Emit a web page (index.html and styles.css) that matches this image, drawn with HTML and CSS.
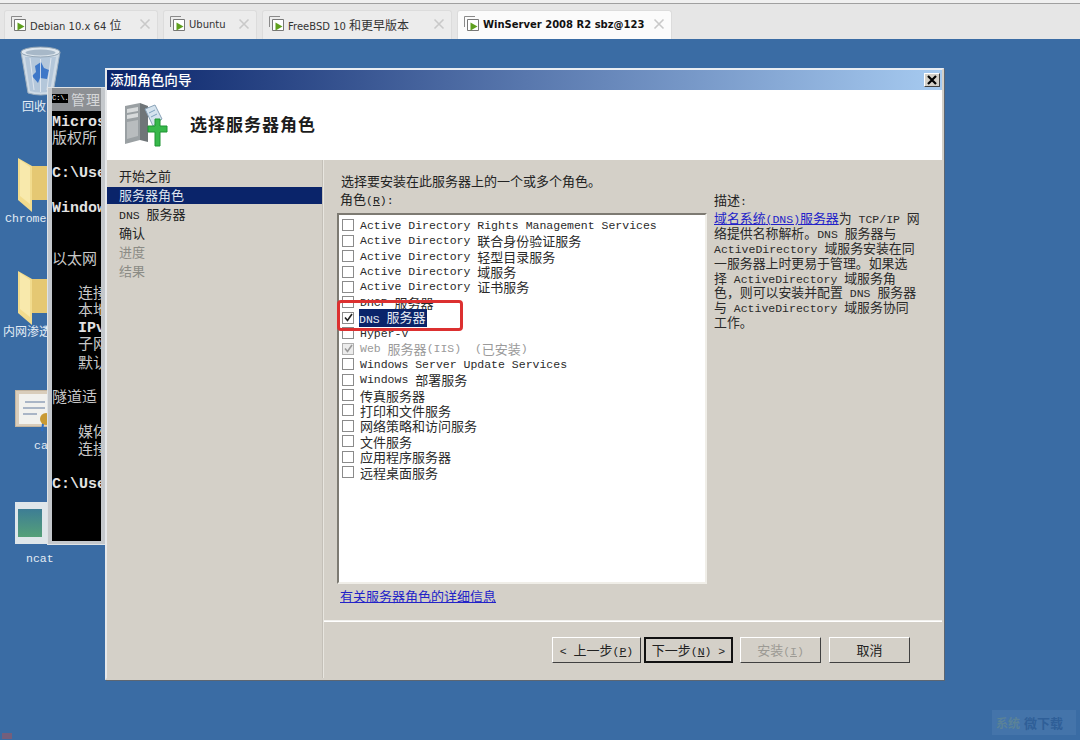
FILE: index.html
```html
<!DOCTYPE html>
<html lang="zh-CN">
<head>
<meta charset="utf-8">
<title>添加角色向导</title>
<link rel="stylesheet" href="styles.css">
</head>
<body>
<svg class="defs" width="0" height="0" aria-hidden="true">
  <symbol id="vm" viewBox="0 0 18 18">
    <path d="M1.5 12V1.5H12" fill="none" stroke="#8a8a8a"/>
    <path d="M4.5 15.5V4.5H15.5V15.5Z" fill="#fff" stroke="#777"/>
    <path d="M7.5 7.5L14.5 11.5L7.5 15.5Z" fill="#5fa01e"/>
  </symbol>
  <symbol id="x" viewBox="0 0 12 12">
    <path d="M1.5 1.5L10.5 10.5M10.5 1.5L1.5 10.5" stroke="#c9c9c9" stroke-width="1.6" fill="none"/>
  </symbol>
</svg>

<header class="tabbar">
  <div class="tab tab-1"><svg class="tab-icon"><use href="#vm"/></svg><span class="tab-label">Debian 10.x 64 <span class="cn">位</span></span><svg class="tab-x"><use href="#x"/></svg></div>
  <div class="tab tab-2"><svg class="tab-icon"><use href="#vm"/></svg><span class="tab-label">Ubuntu</span><svg class="tab-x"><use href="#x"/></svg></div>
  <div class="tab tab-3"><svg class="tab-icon"><use href="#vm"/></svg><span class="tab-label">FreeBSD 10 <span class="cn">和更早版本</span></span><svg class="tab-x"><use href="#x"/></svg></div>
  <div class="tab tab-4 active"><svg class="tab-icon"><use href="#vm"/></svg><span class="tab-label">WinServer 2008 R2 sbz@123</span><svg class="tab-x"><use href="#x"/></svg></div>
</header>

<main class="desktop">
  <div class="desk-icon bin">
    <svg width="42" height="52" viewBox="0 0 42 52">
      <path d="M1 7L8 48Q21 52 33 48L40 7Z" fill="#cfdbe6" stroke="#9fb0bf"/>
      <path d="M5 12L10 46Q21 49 30 46L36 12Z" fill="#b4c7da"/>
      <ellipse cx="20.5" cy="7" rx="19.5" ry="5" fill="#dfe7ee" stroke="#93a5b5"/>
      <ellipse cx="20.5" cy="7.5" rx="15" ry="3" fill="#a7b8c8"/>
      <path d="M15 21L21 17L24 23L29 25L27 34L20 33L18 38L12 31L16 27Z" fill="#3f78c8"/>
      <path d="M10 13L14 45M31 13L27 45M20.500 14V47" stroke="#e8eef4" stroke-width="1" fill="none" opacity=".8"/>
    </svg>
  </div>
  <div class="desk-label label-bin">回收</div>

  <div class="desk-icon folder-a"><svg width="40" height="54" viewBox="0 0 40 54"><path d="M0 0L14 8V54L0 42Z" fill="#f2dc8e"/><path d="M14 8H40V42H14Z" fill="#e5c873"/><path d="M2 2L12 9V46L2 38Z" fill="#f8e9ac"/></svg></div>
  <div class="desk-label label-chrome">Chrome</div>

  <div class="desk-icon folder-b"><svg width="40" height="54" viewBox="0 0 40 54"><path d="M0 0L14 8V54L0 42Z" fill="#f2dc8e"/><path d="M14 8H40V42H14Z" fill="#e5c873"/><path d="M2 2L12 9V46L2 38Z" fill="#f8e9ac"/></svg></div>
  <div class="desk-label label-net">内网渗透</div>

  <div class="desk-icon cert"><svg width="40" height="42" viewBox="0 0 40 42"><rect x="0.5" y="0.5" width="36" height="36" fill="#d9cdbb" stroke="#c4b59f"/><rect x="4" y="4" width="32" height="30" fill="#f1f1ee"/><path d="M10 12H30M8 18H30M8 24H22" stroke="#a9b5c6" stroke-width="2"/><circle cx="31" cy="29" r="6" fill="#c99a34"/><path d="M28 34L27 41M34 34L35 41" stroke="#2f6fc4" stroke-width="2"/></svg></div>
  <div class="desk-label label-ca">ca</div>

  <div class="desk-icon ncat"><svg width="40" height="42" viewBox="0 0 40 42"><defs><linearGradient id="ng" x1="0" y1="0" x2="0" y2="1"><stop offset="0" stop-color="#3d7d95"/><stop offset="1" stop-color="#55a078"/></linearGradient></defs><rect width="40" height="42" fill="#dfe6ea"/><rect x="3" y="7" width="24" height="28" fill="url(#ng)"/></svg></div>
  <div class="desk-label label-ncat">ncat</div>

  <section class="cmd">
    <div class="cmd-title"><span class="cmd-badge">C:\.</span><span class="cmd-name">管理员</span></div>
    <div class="cmd-body">
      <div class="cb c1"><b>Micros</b></div>
      <div class="cb c2">版权所</div>
      <div class="cb c3"><b>C:\Use</b></div>
      <div class="cb c4"><b>Window</b></div>
      <div class="cb c5">以太网</div>
      <div class="cb c6">连接</div>
      <div class="cb c7">本地</div>
      <div class="cb c8"><b>IPv</b></div>
      <div class="cb c9">子网</div>
      <div class="cb c10">默认</div>
      <div class="cb c11">隧道适</div>
      <div class="cb c12">媒体</div>
      <div class="cb c13">连接</div>
      <div class="cb c14"><b>C:\Use</b></div>
    </div>
  </section>

  <section class="dialog">
    <div class="titlebar">
      <span class="title-text">添加角色向导</span>
      <span class="close-btn"><svg width="12" height="10" viewBox="0 0 12 10"><path d="M2 1L10 9M10 1L2 9" stroke="#000" stroke-width="2.2" fill="none"/></svg></span>
    </div>
    <div class="banner">
      <svg class="banner-icon" width="44" height="46" viewBox="0 0 44 46">
        <path d="M1 4L16 1V38L1 42Z" fill="#9aa0a3"/>
        <path d="M16 1L24 4V40L16 38Z" fill="#6f7578"/>
        <path d="M3 7L14 5V9L3 11ZM3 13L14 11V15L3 17Z" fill="#d7dadb"/>
        <path d="M3 20L14 18V34L3 37Z" fill="#b8bcbe"/>
        <path d="M21 7L31 3L38 17L29 24Z" fill="#d5e3ee" stroke="#8aa3b8"/>
        <path d="M25 11L31 8M27 15L33 12" stroke="#7ea1bd"/>
        <path d="M24 24H31V17H36V24H43V30H36V44H31V30H24Z" fill="#37b84a" stroke="#1f9433"/>
      </svg>
      <h1 class="banner-title">选择服务器角色</h1>
    </div>
    <div class="content">
      <nav class="steps">
        <div class="step">开始之前</div>
        <div class="step current">服务器角色</div>
        <div class="step"><span class="l">DNS </span>服务器</div>
        <div class="step">确认</div>
        <div class="step muted">进度</div>
        <div class="step muted">结果</div>
      </nav>
      <div class="panel">
        <div class="panel-main">
          <div class="roles">
            <p class="intro">选择要安装在此服务器上的一个或多个角色。</p>
            <p class="roles-label">角色<span class="l">(<span class="u">R</span>):</span></p>
            <div class="listbox">
              <div class="row"><i class="cb-box"></i><span class="l">Active Directory Rights Management Services</span></div>
              <div class="row"><i class="cb-box"></i><span class="l">Active Directory </span>联合身份验证服务</div>
              <div class="row"><i class="cb-box"></i><span class="l">Active Directory </span>轻型目录服务</div>
              <div class="row"><i class="cb-box"></i><span class="l">Active Directory </span>域服务</div>
              <div class="row"><i class="cb-box"></i><span class="l">Active Directory </span>证书服务</div>
              <div class="row"><i class="cb-box"></i><span class="l">DHCP </span>服务器</div>
              <div class="row"><i class="cb-box on"><svg width="9" height="9" viewBox="0 0 9 9"><path d="M1 4.5L3.5 7.5L8 1" fill="none" stroke="#222" stroke-width="1.6"/></svg></i><span class="sel"><span class="l">DNS </span>服务器</span></div>
              <div class="row"><i class="cb-box"></i><span class="l">Hyper-V</span></div>
              <div class="row dim"><i class="cb-box on gray"><svg width="9" height="9" viewBox="0 0 9 9"><path d="M1 4.5L3.5 7.5L8 1" fill="none" stroke="#999" stroke-width="1.6"/></svg></i><span class="l">Web </span>服务器<span class="l">(IIS)  (</span>已安装<span class="l">)</span></div>
              <div class="row"><i class="cb-box"></i><span class="l">Windows Server Update Services</span></div>
              <div class="row"><i class="cb-box"></i><span class="l">Windows </span>部署服务</div>
              <div class="row"><i class="cb-box"></i>传真服务器</div>
              <div class="row"><i class="cb-box"></i>打印和文件服务</div>
              <div class="row"><i class="cb-box"></i>网络策略和访问服务</div>
              <div class="row"><i class="cb-box"></i>文件服务</div>
              <div class="row"><i class="cb-box"></i>应用程序服务器</div>
              <div class="row"><i class="cb-box"></i>远程桌面服务</div>
            </div>
            <a class="more" href="#">有关服务器角色的详细信息</a>
          </div>
          <aside class="desc">
            <p class="desc-head">描述<span class="l">:</span></p>
            <p class="desc-line"><a href="#">域名系统<span class="l">(DNS)</span>服务器</a>为<span class="l"> TCP/IP </span>网</p>
            <p class="desc-line">络提供名称解析。<span class="l">DNS </span>服务器与</p>
            <p class="desc-line"><span class="l">ActiveDirectory </span>域服务安装在同</p>
            <p class="desc-line">一服务器上时更易于管理。如果选</p>
            <p class="desc-line">择<span class="l"> ActiveDirectory </span>域服务角</p>
            <p class="desc-line">色，则可以安装并配置<span class="l"> DNS </span>服务器</p>
            <p class="desc-line">与<span class="l"> ActiveDirectory </span>域服务协同</p>
            <p class="desc-line">工作。</p>
          </aside>
        </div>
        <div class="footer">
          <button class="btn b-prev" type="button"><span class="l">&lt; </span>上一步<span class="l">(<span class="u">P</span>)</span></button>
          <button class="btn b-next" type="button">下一步<span class="l">(<span class="u">N</span>) &gt;</span></button>
          <button class="btn b-inst" type="button" disabled>安装<span class="l">(<span class="u">I</span>)</span></button>
          <button class="btn b-cancel" type="button">取消</button>
        </div>
      </div>
    </div>
  </section>

  <div class="highlight"></div>
  <div class="speck"></div>
  <div class="watermark"><span class="wm-mark">系统</span><span class="wm-text">微下载</span></div>
</main>
</body>
</html>
```
FILE: styles.css
```css
* { box-sizing: border-box; }
html, body { margin: 0; height: 100%; overflow: hidden; }
body {
  width: 1080px;
  height: 740px;
  display: flex;
  flex-direction: column;
  font-family: "Noto Sans CJK SC", sans-serif;
  font-size: 13px;
  color: #222;
}
p, h1 { margin: 0; }
.defs { position: absolute; }

/* Tabs */
.tabbar {
  height: 39px;
  flex: none;
  display: flex;
  align-items: flex-end;
  padding-left: 4px;
  gap: 5px;
  background: linear-gradient(180deg, #f0f0f0 0 3px, #a0a0a0 3px 4px, #e6e6e6 4px);
}
.tab {
  height: 29px;
  display: flex;
  align-items: center;
  background: #ececec;
  border: 1px solid #dcdcdc;
  border-bottom: 0;
  border-radius: 3px 3px 0 0;
  padding: 0 6px 2px 5px;
  font-family: "DejaVu Sans", "Noto Sans CJK SC", sans-serif;
  font-size: 10px;
  color: #333;
}
.tab-1 { width: 154px; }
.tab-2 { width: 94px; }
.tab-3 { width: 190px; }
.tab-4 { width: 215px; }
.tab.active { background: #fbfbfb; color: #111; font-weight: 700; }
.tab-icon { width: 18px; height: 18px; flex: none; margin-right: 2px; }
.tab-label { flex: 1; white-space: nowrap; }
.tab-x { width: 12px; height: 12px; flex: none; }
.cn { font-size: 12px; }

/* Desktop canvas */
.desktop {
  position: relative;
  flex: 1;
  background: #3a6ca4;
  overflow: hidden;
}
.desk-icon { position: absolute; line-height: 0; }
.bin { left: 20px; top: 6px; }
.folder-a { left: 18px; top: 119px; }
.folder-b { left: 18px; top: 232px; }
.cert { left: 15px; top: 351px; }
.ncat { left: 15px; top: 463px; }
.desk-label {
  position: absolute;
  color: #e4ecf5;
  font-size: 12px;
  line-height: 14px;
  white-space: nowrap;
}
.label-bin { left: 22px; top: 60px; }
.label-chrome { left: 5px; top: 173px; font-family: "Liberation Mono", monospace; font-size: 11.5px; }
.label-net { left: 3px; top: 285px; }
.label-ca { left: 34px; top: 400px; font-family: "Liberation Mono", monospace; font-size: 11.5px; }
.label-ncat { left: 26px; top: 513px; font-family: "Liberation Mono", monospace; font-size: 11.5px; }

/* Console window behind the dialog */
.cmd {
  position: absolute;
  left: 47px;
  top: 48px;
  width: 59px;
  height: 458px;
  background: #c4c8cc;
  border: 1px solid #dfe3e6;
  padding: 0 4px 3px 4px;
  display: flex;
  flex-direction: column;
}
.cmd-title {
  height: 23px;
  flex: none;
  display: flex;
  align-items: center;
  gap: 3px;
  background: #8d9094;
  overflow: hidden;
  white-space: nowrap;
  color: #d5d7d9;
  padding-bottom: 2px;
}
.cmd-badge {
  flex: none;
  width: 16px;
  height: 9px;
  background: #000;
  color: #fff;
  font-family: "Liberation Mono", monospace;
  font-size: 7px;
  line-height: 9px;
}
.cmd-name { font-size: 14px; letter-spacing: 1px; }
.cmd-body { position: relative; flex: 1; background: #000; overflow: hidden; }
.cb {
  position: absolute;
  left: 0;
  color: #c8c8c8;
  font-size: 15px;
  line-height: 18px;
  white-space: nowrap;
}
.cb b { font-family: "Liberation Mono", monospace; font-size: 15px; color: #e2e2e2; }
.c1 { top: 0; }
.c2 { top: 17px; }
.c3 { top: 51px; }
.c4 { top: 86px; }
.c5 { top: 138px; }
.c6, .c7, .c8, .c9, .c10, .c12, .c13 { left: 26px; }
.c6 { top: 172px; }
.c7 { top: 189px; }
.c8 { top: 206px; }
.c9 { top: 223px; }
.c10 { top: 242px; }
.c11 { top: 276px; }
.c12 { top: 311px; }
.c13 { top: 328px; }
.c14 { top: 362px; }

/* Dialog */
.dialog {
  position: absolute;
  left: 105px;
  top: 29px;
  width: 839px;
  height: 612px;
  background: #d4d0c8;
  border: 2px solid #d4d0c8;
  border-top-color: #e9edf2;
  border-left-color: #e6e8ea;
  box-shadow: 1px 1px 0 #5c6672;
  display: flex;
  flex-direction: column;
}
.titlebar {
  height: 20px;
  flex: none;
  display: flex;
  align-items: center;
  justify-content: space-between;
  padding: 0 2px 0 3px;
  background: linear-gradient(90deg, #0a246a, #a6caf0);
  color: #fff;
}
.title-text { font-size: 13.6px; font-weight: 500; line-height: 16px; margin-bottom: 3px; }
.close-btn {
  width: 16px;
  height: 14px;
  display: flex;
  align-items: center;
  justify-content: center;
  background: #d4d0c8;
  border: 1px solid;
  border-color: #fff #404040 #404040 #fff;
}
.banner {
  height: 70px;
  flex: none;
  display: flex;
  align-items: center;
  gap: 22px;
  padding: 0 0 3px 17px;
  background: #fff;
}
.banner-icon { flex: none; margin-top: 2px; }
.banner-title { font-size: 17px; font-weight: 700; letter-spacing: 1px; color: #1c1c1c; }
.content { flex: 1; display: flex; min-height: 0; }

.steps {
  width: 216px;
  flex: none;
  padding-top: 7px;
  border-right: 1px solid #c4c0b8;
}
.step { height: 19px; line-height: 18px; padding-left: 12px; color: #222; }
.step.current { background: #0a246a; color: #dfe4ee; height: 17px; line-height: 15px; margin: 1px 0; }
.step.muted { color: #8b8b85; }

.panel {
  flex: 1;
  display: flex;
  flex-direction: column;
  min-width: 0;
  border-left: 1px solid #e8e6e0;
}
.panel-main {
  height: 461px;
  flex: none;
  display: flex;
  padding: 12px 12px 0 13px;
  border-bottom: 1px solid #f2f1ee;
}
.roles { width: 370px; flex: none; }
.intro { padding-left: 4px; height: 18px; line-height: 17px; }
.roles-label { padding-left: 3px; height: 23px; line-height: 18px; color: #222; }
.listbox {
  height: 371px;
  background: #fff;
  border: 2px solid;
  border-color: #7d7a72 #f0eee8 #f0eee8 #7d7a72;
  padding: 3px 0 0 3px;
}
.row {
  height: 15.45px;
  display: flex;
  align-items: center;
  white-space: pre;
  line-height: 15px;
  padding-bottom: 1px;
  color: #2a2a2a;
}
.row.dim { color: #9a9a9a; }
.cb-box {
  width: 12px;
  height: 12px;
  flex: none;
  margin-right: 6px;
  background: #fff;
  border: 1px solid #8b8b8b;
  display: flex;
  align-items: center;
  justify-content: center;
}
.cb-box.gray { background: #ececec; border-color: #b0b0b0; }
.sel { background: #0a246a; color: #e6eaf2; padding-right: 1px; line-height: 15px; margin-left: -1px; }
.l { font-family: "Liberation Mono", monospace; font-size: 11.5px; white-space: pre; }
.row .l, .row .sel .l { vertical-align: -1px; }
.u { text-decoration: underline; }
.more {
  display: block;
  margin: 3px 0 0 3px;
  color: #2222c8;
  line-height: 17px;
  text-decoration: underline;
}
.desc { flex: 1; padding: 19px 0 0 7px; min-width: 0; }
.desc-head { height: 19px; line-height: 18px; }
.desc-line { height: 14.9px; line-height: 15px; white-space: pre; color: #2a2a2a; font-size: 12.9px; }
.desc-line a { color: #2222c8; text-decoration: underline; }

.footer {
  flex: 1;
  display: flex;
  align-items: flex-start;
  padding: 15px 0 0 228px;
  border-top: 1px solid #fff;
}
.btn {
  height: 26px;
  background: #d4d0c8;
  border: 1px solid;
  border-color: #fff #404040 #404040 #fff;
  font-family: inherit;
  font-size: 13px;
  color: #222;
  padding: 0 0 2px;
  white-space: pre;
}
.b-prev { width: 89px; margin-right: 3px; }
.b-next { width: 89px; margin-right: 7px; border: 2px solid #111; }
.b-inst { width: 81px; margin-right: 8px; color: #9c9a94; }
.b-cancel { width: 81px; }

/* Overlays */
.highlight {
  position: absolute;
  left: 337px;
  top: 261px;
  width: 126px;
  height: 31px;
  border: 3px solid #dc3030;
  border-radius: 4px;
}
.speck { position: absolute; left: 2px; top: 694px; width: 10px; height: 6px; background: #8d5a6b; opacity: .7; }
.watermark {
  position: absolute;
  left: 992px;
  top: 671px;
  width: 84px;
  height: 25px;
  display: flex;
  align-items: center;
  gap: 4px;
  padding: 0 4px;
  background: #4474aa;
  color: #2f5f98;
  font-size: 13px;
  font-weight: 700;
  white-space: nowrap;
  overflow: hidden;
}
.wm-mark { color: #5a8298; font-size: 12px; }
```
